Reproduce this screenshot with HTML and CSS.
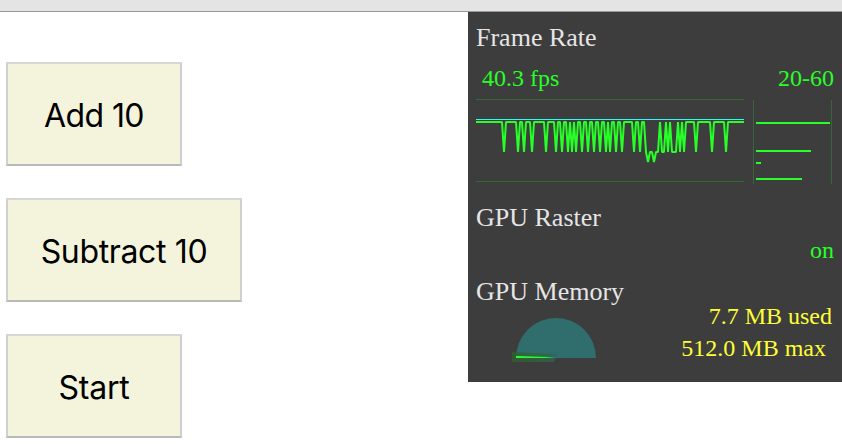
FILE: index.html
```
<!DOCTYPE html>
<html lang="en">
<head>
<meta charset="utf-8">
<title>Counter</title>
<link rel="stylesheet" href="styles.css">
</head>
<body>
<div class="toolbar"></div>
<div class="page">
  <main class="controls">
    <button class="btn add">Add 10</button>
    <button class="btn subtract">Subtract 10</button>
    <button class="btn start">Start</button>
  </main>
  <aside class="meter">
    <h2 class="title">Frame Rate</h2>
    <div class="row fps"><span>40.3 fps</span><span class="range">20-60</span></div>
    <div class="graphs">
      <svg class="timeline" width="268" height="84" viewBox="476 99 268 84">
        <path d="M476 99.5H744M476 181.5H744" stroke="#2f6c2f"/>
        <path d="M476 119.5H744" stroke="#34f8f8"/>
        <polyline fill="none" stroke="#28ff28" stroke-width="2" points="476,122 502,122 504,152 506,122 516,122 518,152 520,122 522,122 524,152 526,122 530,122 532,152 534,122 544,122 546,152 548,122 554,122 556,152 558,122 560,122 562,152 564,122 566,122 568,152 570,122 572,152 574,122 576,152 578,122 580,122 582,152 584,122 586,122 588,152 590,122 592,122 594,152 596,122 598,122 600,152 602,122 604,122 606,152 608,122 610,152 612,122 614,122 616,152 618,122 620,122 622,152 624,122 632,122 634,152 636,122 638,122 640,152 642,122 644,122 646,152 648,162 650,152 652,152 654,162 656,152 658,152 660,122 662,152 664,152 666,122 668,152 670,122 672,152 676,152 678,122 680,152 682,122 684,152 686,122 694,122 696,152 698,122 710,122 712,152 714,122 724,122 726,152 728,122 744,122" stroke-linejoin="bevel"/>
      </svg>
      <svg class="histogram" width="79" height="84" viewBox="753 100 79 84">
        <path d="M753.5 100V184M831.5 100V184" stroke="#38663a"/>
        <path d="M756 123H830M756 151H811M756 163H761M756 179H802" stroke="#28ff28" stroke-width="2"/>
      </svg>
    </div>
    <h2 class="title raster">GPU Raster</h2>
    <div class="status">on</div>
    <h2 class="title memory-title">GPU Memory</h2>
    <div class="memory">
      <svg class="gauge" width="88" height="46" viewBox="510 317 88 46">
        <defs>
          <linearGradient id="glow"><stop offset="0" stop-color="#2f602d"/><stop offset=".8" stop-color="#2f6840"/><stop offset="1" stop-color="#31606a"/></linearGradient>
          <linearGradient id="needle"><stop offset="0" stop-color="#28ff30"/><stop offset=".7" stop-color="#28f838"/><stop offset="1" stop-color="#306d6d"/></linearGradient>
        </defs>
        <path d="M516 358A40 40 0 0 1 596 358Z" fill="#306d6d"/>
        <path d="M512 352L557 354L554 362H512Z" fill="url(#glow)" opacity=".75"/>
        <path d="M516 356L557 357.300V358H516Z" fill="url(#needle)"/>
      </svg>
      <div class="figures"><div class="used">7.7 MB used</div><div class="max">512.0 MB max</div></div>
    </div>
  </aside>
</div>
</body>
</html>
```
FILE: styles.css
```
* { box-sizing: border-box; }
body { margin: 0; height: 444px; overflow: hidden; background: #fff; }
.toolbar { height: 12px; background: #e4e4e4; border-bottom: 1px solid #999; }
.page { display: flex; justify-content: space-between; align-items: flex-start; }
.controls { display: flex; flex-direction: column; align-items: flex-start; gap: 32px; padding: 50px 0 0 6px; }
.btn { width: 176px; height: 104px; padding: 4px 0 0; border: 2px solid; border-color: #d6d6d6 #d0d0d0 #b9b9b9; background: #f4f4dc; color: #000; font: 400 32px/40px Inter, sans-serif; white-space: nowrap; }
.add { letter-spacing: -0.6px; }
.subtract { width: 236px; letter-spacing: -0.35px; }
.start { letter-spacing: -0.2px; }
.meter { width: 374px; height: 370px; padding: 12px 8px 0; background: #3d3d3d; font: 24px/28px "Liberation Serif", serif; }
.title { margin: 0; font-size: 26px; font-weight: 400; line-height: 28px; color: #e6e6e6; }
.row { display: flex; justify-content: space-between; padding-left: 6px; margin-top: 12px; }
.fps, .status { color: #28ff28; }
.graphs { display: flex; gap: 9px; margin-top: 7px; height: 85px; }
.timeline, .histogram, .gauge { display: block; }
.histogram { margin-top: 1px; }
.raster { margin-top: 20px; }
.status { margin-top: 4px; text-align: right; }
.memory-title { margin-top: 14px; }
.memory { display: flex; justify-content: space-between; padding-left: 34px; }
.gauge { margin-top: 11px; }
.figures { color: #ffff38; text-align: right; line-height: 32px; margin-top: -6px; }
.used { padding-right: 2px; }
.max { padding-right: 8px; }
```
